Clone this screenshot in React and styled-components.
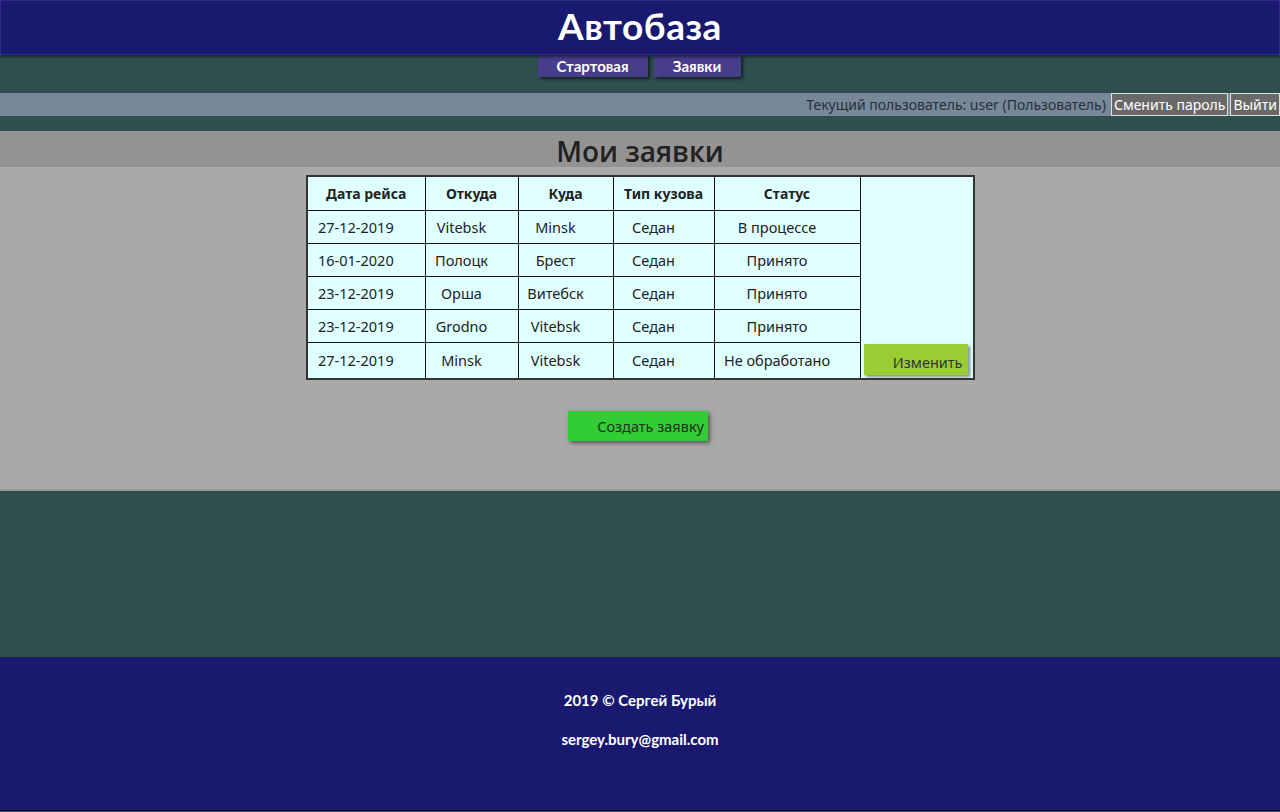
import styled, { createGlobalStyle } from "styled-components"

const GlobalStyle = createGlobalStyle`
    html, body {
        margin: 0;
        padding: 0;
        background-color: #2f4f4f;
        font-family: "Noto Sans", "Open Sans", sans-serif;
    }
    * {
        box-sizing: border-box;
    }
`

const rows = [
    { date: "27-12-2019", from: "Vitebsk", to: "Minsk", body: "Седан", status: "В процессе" },
    { date: "16-01-2020", from: "Полоцк", to: "Брест", body: "Седан", status: "Принято" },
    { date: "23-12-2019", from: "Орша", to: "Витебск", body: "Седан", status: "Принято" },
    { date: "23-12-2019", from: "Grodno", to: "Vitebsk", body: "Седан", status: "Принято" },
    { date: "27-12-2019", from: "Minsk", to: "Vitebsk", body: "Седан", status: "Не обработано", editable: true },
]

const App = () => {
    return (
        <Page>
            <GlobalStyle />
            <Header>
                <Logo>Автобаза</Logo>
            </Header>
            <Nav>
                <NavButton>Стартовая</NavButton>
                <NavButton>Заявки</NavButton>
            </Nav>
            <UserBar>
                <UserText>Текущий пользователь: user (Пользователь)</UserText>
                <UserButton>Сменить пароль</UserButton>
                <UserButton>Выйти</UserButton>
            </UserBar>
            <TitleBand>Мои заявки</TitleBand>
            <Content>
                <Table>
                    <colgroup>
                        <col style={{ width: 118 }} />
                        <col style={{ width: 93 }} />
                        <col style={{ width: 95 }} />
                        <col style={{ width: 101 }} />
                        <col style={{ width: 146 }} />
                        <col style={{ width: 114 }} />
                    </colgroup>
                    <thead>
                        <tr>
                            <Th>Дата рейса</Th>
                            <Th>Откуда</Th>
                            <Th>Куда</Th>
                            <Th>Тип кузова</Th>
                            <Th>Статус</Th>
                            <ActionCell />
                        </tr>
                    </thead>
                    <tbody>
                        {rows.map((r, i) => (
                            <tr key={i}>
                                <Td $align="left">{r.date}</Td>
                                <Td>{r.from}</Td>
                                <Td>{r.to}</Td>
                                <Td>{r.body}</Td>
                                <Td>{r.status}</Td>
                                <ActionCell>
                                    {r.editable && <EditButton>Изменить</EditButton>}
                                </ActionCell>
                            </tr>
                        ))}
                    </tbody>
                </Table>
                <CreateButton>Создать заявку</CreateButton>
            </Content>
            <Spacer />
            <Footer>
                <FooterLine>2019 © Сергей Бурый</FooterLine>
                <FooterLine>sergey.bury@gmail.com</FooterLine>
            </Footer>
        </Page>
    )
}

export default App

const comic = `"Comic Sans MS", "Lato", sans-serif`

const Page = styled.div`
    width: 1280px;
    min-height: 812px;
    display: flex;
    flex-direction: column;
    background-color: #2f4f4f;
`

const Header = styled.div`
    height: 55px;
    background-color: #191970;
    border: 1px solid #2e2a86;
    box-shadow: 0 2px 3px rgba(0, 0, 0, 0.5);
    display: flex;
    justify-content: center;
    position: relative;
    z-index: 2;
`

const Logo = styled.h1`
    margin: 0;
    color: white;
    font-family: ${comic};
    font-size: 37px;
    font-weight: bold;
    line-height: 50px;
    letter-spacing: 0.5px;
`

const Nav = styled.div`
    display: flex;
    justify-content: center;
    gap: 6px;
    margin-top: -1px;
    padding-right: 2px;
    position: relative;
    z-index: 1;
`

const NavButton = styled.div`
    background-color: #483d8b;
    color: white;
    font-family: ${comic};
    font-weight: bold;
    font-size: 15px;
    height: 23px;
    line-height: 25px;
    padding: 0 18px;
    min-width: 87px;
    text-align: center;
    box-shadow: 2px 2px 3px rgba(0, 0, 0, 0.6);
    &:first-child {
        width: 110px;
    }
`

const UserBar = styled.div`
    margin-top: 16px;
    height: 23px;
    background-color: #778899;
    display: flex;
    justify-content: flex-end;
    align-items: center;
    gap: 2px;
`

const UserText = styled.span`
    color: #2b2f3a;
    font-size: 14px;
    margin-right: 3px;
`

const UserButton = styled.button`
    height: 23px;
    padding: 0 2px;
    background-color: #696969;
    color: white;
    font-family: "Noto Sans", sans-serif;
    font-size: 14px;
    border: 1px solid #e0e0e0;
    border-radius: 0;
    cursor: pointer;
`

const TitleBand = styled.h2`
    margin: 15px 0 0;
    height: 36px;
    background-color: #939393;
    color: #222;
    font-family: "Open Sans", "Noto Sans", sans-serif;
    font-size: 28px;
    font-weight: 600;
    line-height: 40px;
    text-align: center;
`

const Content = styled.div`
    height: 324px;
    background-color: #a9a9a9;
    display: flex;
    flex-direction: column;
    align-items: center;
    padding-top: 8px;
    border-bottom: 2px solid #8f9a98;
`

const Table = styled.table`
    width: 667px;
    table-layout: fixed;
    border-collapse: collapse;
    background-color: #e0ffff;
    border: 2px solid #333;
    color: #222;
    font-size: 14.5px;
    margin-left: 1px;
`

const Th = styled.th`
    height: 34px;
    border: 1px solid #111;
    font-size: 14px;
    font-weight: bold;
    padding: 0 4px;
    text-align: center;
`

const Td = styled.td`
    height: 33px;
    border: 1px solid #111;
    padding: ${({ $align }) => ($align ? "0 4px 0 10px" : "0 20px 0 0")};
    text-align: ${({ $align }) => $align || "center"};
    white-space: nowrap;
`

const ActionCell = styled.td`
    border: none;
    padding: 2px 4px 3px 3px;
    vertical-align: bottom;
`

const EditButton = styled.button`
    display: block;
    width: 104px;
    height: 31px;
    background-color: #9acd32;
    border: none;
    color: #333;
    font-family: "Noto Sans", sans-serif;
    font-size: 14.5px;
    text-align: right;
    padding: 4px 5px 0 0;
    box-shadow: 2px 2px 3px rgba(0, 0, 0, 0.45);
    cursor: pointer;
`

const CreateButton = styled.button`
    margin-top: 31px;
    margin-right: 4px;
    width: 140px;
    height: 30px;
    background-color: #32cd32;
    border: none;
    color: #1f2f1f;
    font-family: "Noto Sans", sans-serif;
    font-size: 14.5px;
    text-align: right;
    padding: 0 4px 0 0;
    box-shadow: 2px 2px 4px rgba(0, 0, 0, 0.5);
    cursor: pointer;
`

const Spacer = styled.div`
    height: 166px;
`

const Footer = styled.div`
    height: 154px;
    background-color: #191970;
    border-top: 1px solid #17235a;
    border-bottom: 1px solid #0a0a30;
    display: flex;
    flex-direction: column;
    align-items: center;
    padding-top: 31px;
    gap: 17px;
`

const FooterLine = styled.div`
    color: white;
    font-family: ${comic};
    font-weight: bold;
    font-size: 15px;
    line-height: 22px;
`
